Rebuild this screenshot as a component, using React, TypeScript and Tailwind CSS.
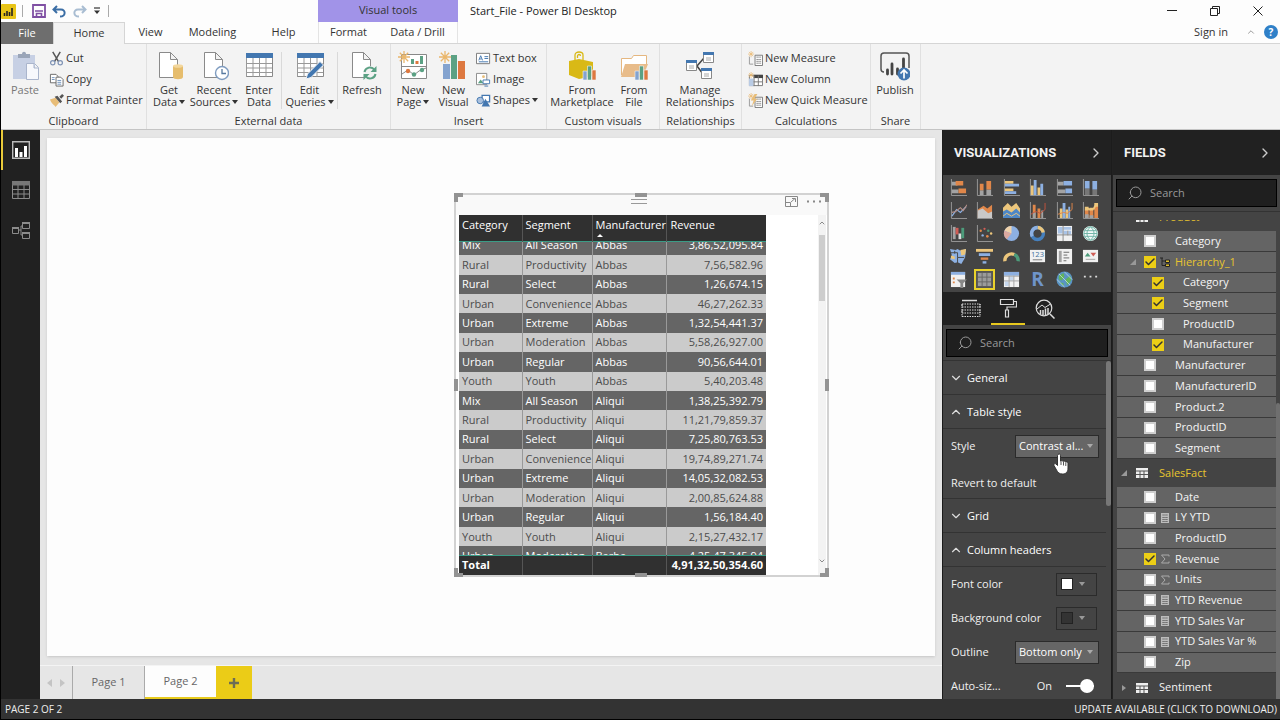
import type { ReactNode } from "react";
import { Check, ChevronDown, ChevronRight, ChevronUp, Search } from "lucide-react";

/* ---------- shared bits ---------- */

interface IconProps {
  children: ReactNode;
  className: string;
  box?: string;
}

function Icon({ children, className, box = "0 0 18 18" }: IconProps) {
  return (
    <svg viewBox={box} className={`shrink-0 ${className}`} fill="none" aria-hidden="true">
      {children}
    </svg>
  );
}

function Caret() {
  return (
    <Icon box="0 0 6 4" className="mb-0.5 ml-0.5 inline-block h-1 w-1.5">
      <path d="M0 0h6L3 4z" fill="#333" />
    </Icon>
  );
}

const spark = (
  <path
    d="M6 0v12M0 6h12M1.800 1.800l8.400 8.400M10.200 1.800l-8.400 8.400"
    stroke="#eab76c"
    strokeWidth="1.3"
  />
);

/* ---------- title bar ---------- */

function TitleBar() {
  return (
    <div className="flex h-[22px] bg-[#fdfdfd] text-[#222]">
      <div className="flex w-[317px] items-center">
        <Icon box="0 0 15 15" className="h-[15px] w-[15px]">
          <rect width="15" height="15" rx="1" fill="#e8c417" />
          <path d="M3.500 12V9M6 12V7M8.500 12V8M11 12V4" stroke="#222" strokeWidth="1.600" />
        </Icon>
        <span className="ml-1.5 h-3 w-px bg-[#aaa]" />
        <button aria-label="Save" className="ml-[9px]">
          <Icon box="0 0 14 14" className="h-3.5 w-3.5">
            <path d="M1 1h12v12H1z" stroke="#7f4fa3" strokeWidth="1.800" />
            <path d="M3 7h8M4.500 13V9.500h5V13" stroke="#7f4fa3" strokeWidth="1.600" />
          </Icon>
        </button>
        <button aria-label="Undo" className="ml-1.5">
          <Icon box="0 0 14 13" className="h-[13px] w-3.5">
            <path d="M5 1L1.500 4.500 5 8M1.500 4.500H9c5 0 5 7-1 7" stroke="#3b6ea5" strokeWidth="2" />
          </Icon>
        </button>
        <button aria-label="Redo" className="ml-[7px]">
          <Icon box="0 0 14 13" className="h-[13px] w-3.5">
            <path d="M9 1l3.500 3.500L9 8M12.500 4.500H5c-5 0-5 7 1 7" stroke="#a9bdd2" strokeWidth="2" />
          </Icon>
        </button>
        <button aria-label="Customize toolbar" className="ml-1.5">
          <Icon box="0 0 8 8" className="h-2 w-2">
            <path d="M1 1h6" stroke="#333" strokeWidth="1.200" />
            <path d="M1 3.500h6L4 7z" fill="#333" />
          </Icon>
        </button>
        <span className="ml-[7px] h-3 w-px bg-[#aaa]" />
      </div>
      <div className="w-[140px] bg-[#a193e8] text-center leading-[19px] text-[#333]">
        Visual tools
      </div>
      <h1 className="ml-3 leading-[22px]">Start_File - Power BI Desktop</h1>
      <div className="ml-auto flex items-center gap-[33px] pr-[17px]">
        <button aria-label="Minimize">
          <Icon box="0 0 10 10" className="h-2.5 w-2.5">
            <path d="M0 4.500h10" stroke="#222" />
          </Icon>
        </button>
        <button aria-label="Restore">
          <Icon box="0 0 10 10" className="h-2.5 w-2.5">
            <path d="M.5 2.500h7v7h-7zM2.500 2.500v-2h7v7h-2" stroke="#222" />
          </Icon>
        </button>
        <button aria-label="Close">
          <Icon box="0 0 10 10" className="h-2.5 w-2.5">
            <path d="M.5.5l9 9M9.500.5l-9 9" stroke="#222" />
          </Icon>
        </button>
      </div>
    </div>
  );
}

const tabs = [
  { name: "View", width: "w-[51px]" },
  { name: "Modeling", width: "w-[73px]" },
  { name: "Help", width: "w-[69px]" },
];

function RibbonTabs() {
  return (
    <nav className="flex h-[22px] bg-[#fdfdfd]">
      <button className="w-[52px] bg-[#6e6e6e] text-white">File</button>
      <button className="w-[72px] border-x border-t border-[#d5d5d5] bg-[#f3f3f3]">Home</button>
      <div className="flex grow border-b border-[#d5d5d5]">
        {tabs.map((tab) => (
          <button key={tab.name} className={tab.width}>
            {tab.name}
          </button>
        ))}
        <button className="w-[60px] border-l border-[#e4e4e4]">Format</button>
        <button className="w-20 border-r border-[#e4e4e4]">Data / Drill</button>
        <div className="ml-auto flex items-center gap-2 pr-0.5">
          <button className="pr-2.5">Sign in</button>
          <ChevronUp className="h-2.5 w-2.5 text-[#888]" />
          <button
            aria-label="Help"
            className="h-3.5 w-3.5 rounded-full bg-[#2f80c8] text-[10px] leading-[14px] font-bold text-white"
          >
            ?
          </button>
        </div>
      </div>
    </nav>
  );
}

/* ---------- ribbon ---------- */

interface GroupProps {
  label: string;
  width: string;
  children: ReactNode;
}

function Group({ label, width, children }: GroupProps) {
  return (
    <section className={`flex shrink-0 flex-col border-r border-[#e0e0e0] ${width}`}>
      <div className="flex h-[70px] pt-1">{children}</div>
      <h2 className="text-center leading-4">{label}</h2>
    </section>
  );
}

interface BigButtonProps {
  icon: ReactNode;
  lines: string[];
  width: string;
  menu?: boolean;
}

function BigButton({ icon, lines, width, menu }: BigButtonProps) {
  return (
    <button className={`flex shrink-0 flex-col items-center pt-[3px] leading-3 ${width}`}>
      <Icon box="0 0 30 30" className="mb-[3px] h-[30px] w-[30px]">
        {icon}
      </Icon>
      {lines.map((line, i) => (
        <span key={line} className="whitespace-nowrap">
          {line}
          {menu && i === lines.length - 1 && <Caret />}
        </span>
      ))}
    </button>
  );
}

function SmallButton({ icon, label, menu }: { icon: ReactNode; label: string; menu?: boolean }) {
  return (
    <button className="flex h-[21px] items-center gap-0.5 whitespace-nowrap">
      <Icon box="0 0 16 16" className="h-[15px] w-[15px]">
        {icon}
      </Icon>
      <span>
        {label}
        {menu && <Caret />}
      </span>
    </button>
  );
}

const doc = <path d="M5.500 1.500h11l7 7v18h-18zM16.500 1.500v7h7" fill="#fff" stroke="#8a8a8a" />;
const grid = (
  <>
    <path d="M2.500 2.500h26v23h-26z" fill="#fff" stroke="#8a8a8a" />
    <path d="M2.500 7v19M9 7v19M15.500 7v19M22 7v19M2 12.500h26M2 17h26M2 21.500h26" stroke="#999" />
    <path d="M2 2h27v5H2z" fill="#4377b0" />
  </>
);

const getData = (
  <>
    {doc}
    <path d="M19 15v11c0 3 10 3 10 0V15z" fill="#e6bd6d" />
    <ellipse cx="24" cy="15" rx="5" ry="1.800" fill="#f3d79d" />
  </>
);
const recent = (
  <>
    {doc}
    <circle cx="23" cy="22" r="6.500" fill="#fff" stroke="#7f9cc0" strokeWidth="1.400" />
    <path d="M23 18v4.500h4" stroke="#56799f" strokeWidth="1.300" />
  </>
);
const editQueries = (
  <>
    {grid}
    <path d="M11 28l1.500-5L25 10.500l3.500 3.500L16 26.500z" fill="#4377b0" stroke="#f3f3f3" />
  </>
);
const refresh = (
  <>
    {doc}
    <circle cx="23" cy="22" r="7" fill="#f3f3f3" />
    <path d="M17.500 21a5.500 5.500 0 0 1 10-2M28.500 23a5.500 5.500 0 0 1-10 2" stroke="#5ba184" strokeWidth="2" />
    <path d="M29.500 15v6h-6zM16.500 29v-6h6z" fill="#5ba184" />
  </>
);
const paste = (
  <>
    <path d="M3 4h22v24H3z" fill="#c7d0e4" />
    <path d="M8 7V3h4c0-3 4-3 4 0h4v4z" fill="#9aa5b8" />
    <path d="M16.500 12.500h8l4 4v12h-12zM24 13v4h4" fill="#f7f8fc" stroke="#aab5cc" />
  </>
);
const newPage = (
  <>
    <path d="M3.500 3.500h25v24h-25zM3 15.500h25" fill="#fff" stroke="#888" />
    <path d="M13 8h3v5h-3zM22 5h3v8h-3z" fill="#5ba184" />
    <path d="M17.500 10h3v3h-3z" fill="#dd7840" />
    <path d="M4 23l6-4 6 5 5-4 7-3" stroke="#888" />
    <circle cx="10" cy="20" r="2.200" fill="#dd7840" />
    <circle cx="16" cy="23.500" r="2.200" fill="#5ba184" />
    <circle cx="24" cy="19" r="2.200" fill="#5ba184" />
    {spark}
  </>
);
const newVisual = (
  <>
    <path d="M4 13h7v15H4z" fill="#84a3cf" />
    <path d="M12 4h6v24h-6z" fill="#5ba184" />
    <path d="M19 10h7v18h-7z" fill="#dd7840" />
    {spark}
  </>
);
const miniBars = (
  <>
    <path d="M16 20h4v9h-4z" fill="#84a3cf" stroke="#f3f3f3" strokeWidth=".6" />
    <path d="M20.500 15h4v14h-4z" fill="#5ba184" stroke="#f3f3f3" strokeWidth=".6" />
    <path d="M25 19h4v10h-4z" fill="#dd7840" stroke="#f3f3f3" strokeWidth=".6" />
  </>
);
const marketplace = (
  <>
    <path d="M2 10l10-2 14 3v14l-14 3-10-4z" fill="#d9b916" />
    <path d="M8 10V4c0-4 8-4 8 0v5M10.500 7V5c0-2 3-2 3 0" stroke="#d9b916" strokeWidth="1.300" />
    {miniBars}
  </>
);
const fromFile = (
  <>
    <path d="M2.500 24V7.500h10l2-3h13V13" fill="#fff" stroke="#e5b780" />
    <path d="M6 13h23l-5 13H2z" fill="#e8bc8a" />
    {miniBars}
  </>
);
const relations = (
  <>
    <path d="M12 15l7-8M12 15l6 8" stroke="#444" strokeWidth="1.500" />
    <path d="M1.500 9.500h10v10h-10zM18.500 1.500h10v10h-10zM16.500 17.500h10v10h-10z" fill="#fff" stroke="#888" />
    <path d="M1 9h11v3H1zM18 1h11v3H18zM16 17h11v3H16z" fill="#4377b0" />
    <path d="M4 15h5M4 17h5M21 7h5M21 9h5M19 23h5M19 25h5" stroke="#aaa" />
  </>
);
const publish = (
  <>
    <path d="M4 21c-2 0-3-1-3-3V5c0-2 1-3 3-3h22c2 0 3 1 3 3v12" stroke="#555" strokeWidth="1.500" />
    <path d="M7.500 23v-4M12 23V13M17.500 23v-5M23.500 21V8" stroke="#444" strokeWidth="2.800" strokeLinecap="round" />
    <circle cx="24" cy="23" r="6.500" fill="#4377b0" />
    <path d="M24 27.500v-8M20.500 22.500l3.500-3.500 3.500 3.500" stroke="#fff" strokeWidth="1.700" />
  </>
);

const measure = (
  <>
    <path d="M1.500 6v8h4" stroke="#999" />
    <path d="M7.500 4.500h8v11h-8z" fill="#fff" stroke="#777" />
    <path d="M9 6.500h5M9 9h5M9 11h5M9 13h5" stroke="#777" strokeDasharray="1.500 .5" />
    <g transform="scale(.55)">{spark}</g>
  </>
);

function Ribbon() {
  return (
    <div className="flex h-[87px] overflow-hidden border-b border-[#c4c4c4] bg-[#f3f3f3]">
      <Group label="Clipboard" width="w-[146px]">
        <div className="flex text-[#777]">
          <BigButton icon={paste} lines={["Paste"]} width="w-12" />
        </div>
        <div>
          <SmallButton
            label="Cut"
            icon={
              <>
                <path d="M4 1l6 10M12 1L6 11" stroke="#555" strokeWidth="1.600" />
                <circle cx="4" cy="12.500" r="2.300" stroke="#7f93b5" strokeWidth="1.300" />
                <circle cx="12" cy="12.500" r="2.300" stroke="#7f93b5" strokeWidth="1.300" />
              </>
            }
          />
          <SmallButton
            label="Copy"
            icon={
              <>
                <path d="M1.500 2.500h6l2 2v7h-8z" fill="#fff" stroke="#666" />
                <path d="M7.500 5.500h5l2.500 2.500v7H7.500z" fill="#fff" stroke="#666" />
                <path d="M3 6h3M3 8h3M9 9h4M9 11h4M9 13h4" stroke="#6c8fba" />
              </>
            }
          />
          <SmallButton
            label="Format Painter"
            icon={
              <>
                <path d="M1 7l6-2 4 5-4 5c-2-3-4-3-6-8z" fill="#e8bd78" />
                <path d="M6 4l3-1 5 6-2 2zM11 4l3-3 2 2-3 3z" fill="#555" />
              </>
            }
          />
        </div>
      </Group>
      <Group label="External data" width="w-[244px]">
        <BigButton icon={getData} lines={["Get", "Data"]} width="w-11" menu />
        <BigButton icon={recent} lines={["Recent", "Sources"]} width="w-[46px]" menu />
        <BigButton icon={grid} lines={["Enter", "Data"]} width="w-11" />
        <span className="my-1 w-px bg-[#d9d9d9]" />
        <BigButton icon={editQueries} lines={["Edit", "Queries"]} width="w-[55px]" menu />
        <span className="my-1 w-px bg-[#d9d9d9]" />
        <BigButton icon={refresh} lines={["Refresh"]} width="w-12" />
      </Group>
      <Group label="Insert" width="w-[156px]">
        <BigButton icon={newPage} lines={["New", "Page"]} width="w-11" menu />
        <BigButton icon={newVisual} lines={["New", "Visual"]} width="w-[37px]" />
        <div className="pl-1">
          <SmallButton
            label="Text box"
            icon={
              <>
                <path d="M.5 2.500h14v11H.5z" fill="#fff" stroke="#777" />
                <path d="M3 10l2-5 2 5M4 8.500h2M9 6h4M9 8h4M3 11.500h10" stroke="#4377b0" />
              </>
            }
          />
          <SmallButton
            label="Image"
            icon={
              <>
                <path d="M.5 1.500h11v12H.5z" fill="#fff" stroke="#888" />
                <path d="M2 12l3-4 3 4z" fill="#5ba184" />
                <circle cx="8" cy="5" r="1.500" fill="#e8bd78" />
                <path d="M7.500 8.500h7v4h-7zM9 15h4" fill="#fff" stroke="#4377b0" />
              </>
            }
          />
          <SmallButton
            label="Shapes"
            menu
            icon={
              <>
                <path d="M6.500 2.500h8v7h-8z" fill="#fff" stroke="#4377b0" strokeWidth="1.400" />
                <circle cx="4.500" cy="8" r="3.500" fill="#a9c0dd" stroke="#4377b0" />
                <path d="M10 6l5 8.500H6z" fill="#4377b0" />
              </>
            }
          />
        </div>
      </Group>
      <Group label="Custom visuals" width="w-[113px]">
        <BigButton icon={marketplace} lines={["From", "Marketplace"]} width="w-[70px]" />
        <BigButton icon={fromFile} lines={["From", "File"]} width="w-[34px]" />
      </Group>
      <Group label="Relationships" width="w-[82px]">
        <BigButton icon={relations} lines={["Manage", "Relationships"]} width="w-[80px]" />
      </Group>
      <Group label="Calculations" width="w-[129px]">
        <div className="pl-[6px]">
          <SmallButton label="New Measure" icon={measure} />
          <SmallButton
            label="New Column"
            icon={
              <>
                <path d="M1.500 3.500h14v11h-14z" fill="#fff" stroke="#777" />
                <path d="M1 7h5v8H1z" fill="#b9cbe4" />
                <path d="M6 3h10v3.500H6z" fill="#444" />
                <path d="M6.500 4v11M11 4v11M6 10.500h9" stroke="#777" />
                <g transform="scale(.55)">{spark}</g>
              </>
            }
          />
          <SmallButton
            label="New Quick Measure"
            icon={
              <>
                {measure}
                <path d="M7 1L3 8h3l-2 6 6-8H7l3-5z" fill="#e8bd78" />
              </>
            }
          />
        </div>
      </Group>
      <Group label="Share" width="w-[50px]">
        <BigButton icon={publish} lines={["Publish"]} width="w-12" />
      </Group>
    </div>
  );
}

/* ---------- left rail ---------- */

function ViewRail() {
  return (
    <nav className="flex w-[39px] shrink-0 flex-col bg-[#212121]">
      <button aria-label="Report" className="flex h-10 items-center border-l-2 border-[#e8c93a] pl-[9px]">
        <Icon className="h-[18px] w-[18px]">
          <path d="M.7.7h16.600v16.600H.7z" stroke="#bbb" strokeWidth="1.400" />
          <path d="M4.500 16V7M9 16v-5M13.500 16V5" stroke="#fff" strokeWidth="3" />
        </Icon>
      </button>
      <button aria-label="Data" className="flex h-10 items-center pl-[11px]">
        <Icon className="h-[18px] w-[18px]">
          <path d="M.5.5h17v17H.5zM6 4v14M12 4v14M0 8.500h18M0 13h18" stroke="#8b8b8b" />
          <path d="M0 0h18v4.500H0z" fill="#777" />
        </Icon>
      </button>
      <button aria-label="Relationships" className="flex h-10 items-center pl-[11px]">
        <Icon className="h-[18px] w-[18px]">
          <path d="M.5 6.500h6v6h-6zM10.500 1.500h7v6h-7zM10.500 11.500h7v6h-7zM7 9h2V5h2M9 9v5h2" stroke="#8b8b8b" />
          <path d="M0 6h7v2H0zM10 1h8v2h-8zM10 11h8v2h-8z" fill="#8b8b8b" />
        </Icon>
      </button>
    </nav>
  );
}

/* ---------- report canvas ---------- */

const rows = [
  ["Mix", "All Season", "Abbas", "3,86,52,095.84"],
  ["Rural", "Productivity", "Abbas", "7,56,582.96"],
  ["Rural", "Select", "Abbas", "1,26,674.15"],
  ["Urban", "Convenience", "Abbas", "46,27,262.33"],
  ["Urban", "Extreme", "Abbas", "1,32,54,441.37"],
  ["Urban", "Moderation", "Abbas", "5,58,26,927.00"],
  ["Urban", "Regular", "Abbas", "90,56,644.01"],
  ["Youth", "Youth", "Abbas", "5,40,203.48"],
  ["Mix", "All Season", "Aliqui", "1,38,25,392.79"],
  ["Rural", "Productivity", "Aliqui", "11,21,79,859.37"],
  ["Rural", "Select", "Aliqui", "7,25,80,763.53"],
  ["Urban", "Convenience", "Aliqui", "19,74,89,271.74"],
  ["Urban", "Extreme", "Aliqui", "14,05,32,082.53"],
  ["Urban", "Moderation", "Aliqui", "2,00,85,624.88"],
  ["Urban", "Regular", "Aliqui", "1,56,184.40"],
  ["Youth", "Youth", "Aliqui", "2,15,27,432.17"],
  ["Urban", "Moderation", "Barba", "4,25,47,345.94"],
];

function Columns() {
  return (
    <colgroup>
      <col className="w-[63px]" />
      <col className="w-[70px]" />
      <col className="w-[74px]" />
      <col className="w-[100px]" />
    </colgroup>
  );
}

function DataTable() {
  return (
    <div className="w-[307px]">
      <table className="w-full table-fixed bg-[#303030] text-left text-white">
        <Columns />
        <thead>
          <tr className="h-[26px] border-b border-[#3a9c86] align-top leading-5">
            <th className="border-r border-[#555] pl-[3px] font-normal">Category</th>
            <th className="border-r border-[#555] pl-[3px] font-normal">Segment</th>
            <th className="relative border-r border-[#555] pl-[3px] font-normal">
              Manufacturer
              <Icon box="0 0 6 3" className="absolute bottom-1 left-1 h-[3px] w-1.5">
                <path d="M0 3h6L3 0z" fill="#fff" />
              </Icon>
            </th>
            <th className="pl-1 font-normal">Revenue</th>
          </tr>
        </thead>
      </table>
      <div className="h-[313px] overflow-hidden">
        <table className="-mt-1.5 h-[330px] w-full table-fixed leading-4">
          <Columns />
          <tbody>
            {rows.map((row, i) => (
              <tr
                key={i}
                className={i % 2 === 0 ? "bg-[#656565] font-medium text-white" : "bg-[#cbcbcb] text-[#4c4c4c]"}
              >
                <td className="border-r border-[#999] pl-[3px]">{row[0]}</td>
                <td className="border-r border-[#999] pl-[3px] whitespace-nowrap">{row[1]}</td>
                <td className="border-r border-[#999] pl-[3px]">{row[2]}</td>
                <td className="pr-[3px] text-right">{row[3]}</td>
              </tr>
            ))}
          </tbody>
        </table>
      </div>
      <table className="w-full table-fixed bg-[#303030] text-left text-white">
        <Columns />
        <tbody>
          <tr className="h-5 border-t border-[#3a9c86]">
            <th className="border-r border-[#555] pl-[3px]">Total</th>
            <td className="border-r border-[#555]" />
            <td className="border-r border-[#555]" />
            <td className="pr-[3px] text-right font-bold whitespace-nowrap">4,91,32,50,354.60</td>
          </tr>
        </tbody>
      </table>
    </div>
  );
}

function Visual() {
  return (
    <article className="absolute top-[55px] left-[407px] flex h-96 w-[375px] flex-col border-2 border-[#d2d2d2] bg-white">
      <Icon box="0 0 375 384" className="pointer-events-none absolute -inset-0.5 h-96 w-[375px]">
        <path
          d="M2 9V2h7M366 2h7v7M373 375v7h-7M9 382H2v-7M181 2h12M181 382h12M2 186v12M373 186v12"
          stroke="#939393"
          strokeWidth="4"
        />
      </Icon>
      <div className="grid h-5 grid-cols-[1fr_auto_1fr] items-start bg-[#f9f9f9] pr-1.5">
        <span />
        <Icon box="0 0 16 5" className="mt-1 h-[5px] w-4">
          <path d="M0 .5h16M0 4.500h16" stroke="#999" />
        </Icon>
        <div className="flex items-center justify-end gap-[9px] pt-px">
          <button aria-label="Focus mode">
            <Icon box="0 0 13 11" className="h-[11px] w-[13px]">
              <path d="M.5.5h12v10H.5zM.5 6.500h5v4M6 6l4-3.500M7 2.500h3.500V6" stroke="#888" />
            </Icon>
          </button>
          <button aria-label="More options">
            <Icon box="0 0 14 3" className="h-[3px] w-3.5">
              <path d="M0 1.500h2M6 1.500h2M12 1.500h2" stroke="#888" strokeWidth="2" />
            </Icon>
          </button>
        </div>
      </div>
      <div className="flex grow justify-between px-[3px] pr-px pl-[3px]">
        <DataTable />
        <div className="flex w-2 flex-col items-center bg-[#f3f3f3] pt-1">
          <ChevronUp className="h-2 w-2 text-[#555]" />
          <div className="mt-2 h-[66px] w-1.5 bg-[#cdcdcd]" />
          <ChevronDown className="mt-auto mb-2.5 h-2 w-2 text-[#555]" />
        </div>
      </div>
    </article>
  );
}

function ReportArea() {
  return (
    <main className="flex min-w-0 grow flex-col bg-[#e6e6e6]">
      <div className="relative mx-[7px] mt-2 mb-[9px] grow bg-[#fdfdfd] shadow-sm">
        <Visual />
      </div>
      <nav className="flex h-[34px] shrink-0 border-t border-[#f4f4f4] text-[#666]">
        <div className="flex w-8 items-center justify-center gap-2">
          <button aria-label="Previous page">
            <Icon box="0 0 5 8" className="h-2 w-[5px]">
              <path d="M5 0v8L0 4z" fill="#c4c4c4" />
            </Icon>
          </button>
          <button aria-label="Next page">
            <Icon box="0 0 5 8" className="h-2 w-[5px]">
              <path d="M0 0v8l5-4z" fill="#c4c4c4" />
            </Icon>
          </button>
        </div>
        <button className="w-[73px] border-x border-[#aaa] font-medium">Page 1</button>
        <button className="w-[71px] border-b-2 border-[#e8cb1c] bg-[#fdfdfd] font-medium">Page 2</button>
        <button aria-label="New page" className="flex w-9 items-center justify-center bg-[#ebcc17]">
          <Icon box="0 0 10 10" className="h-2.5 w-2.5">
            <path d="M5 0v10M0 5h10" stroke="#6d6d55" strokeWidth="2.400" />
          </Icon>
        </button>
      </nav>
    </main>
  );
}

/* ---------- visualizations pane ---------- */

const O = "#e0874a";
const B = "#8db0e2";
const Y = "#ecc67c";
const G = "#a3a3a3";
const axis = <path d="M1.500 0v17.500H18" stroke="#9a9a9a" />;

const visuals: { name: string; art: ReactNode }[] = [
  {
    name: "Stacked bar",
    art: <>{axis}<path d="M2 3h6v4H2zM2 11h7v4H2z" fill={G} /><path d="M6 2h8v5H6zM9 10h8v5H9z" fill={O} /></>,
  },
  {
    name: "Stacked column",
    art: <>{axis}<path d="M4 12h4v5H4zM11 11h5v6h-5z" fill={G} /><path d="M4 5h4v7H4zM11 2h5v9h-5z" fill={O} /></>,
  },
  {
    name: "Clustered bar",
    art: <>{axis}<path d="M2 2h9v3H2zM2 10h9v3H2z" fill={Y} /><path d="M2 5h15v3H2zM2 13h12v3H2z" fill={B} /></>,
  },
  {
    name: "Clustered column",
    art: <>{axis}<path d="M2 7h3v10H2zM9 9h3v8H9z" fill={Y} /><path d="M5 1h3v16H5zM12 5h3v12h-3z" fill={B} /></>,
  },
  {
    name: "100% bar",
    art: <>{axis}<path d="M2 3h6v4H2zM2 11h8v4H2z" fill={G} /><path d="M8 2h9v5H8zM10 10h7v5h-7z" fill={B} /></>,
  },
  {
    name: "100% column",
    art: <>{axis}<path d="M3 10h5v7H3zM11 11h5v6h-5z" fill="#777" /><path d="M3 2h5v8H3zM11 2h5v9h-5z" fill={B} /></>,
  },
  {
    name: "Line",
    art: <>{axis}<path d="M2 15l5-7 4 3 6-6" stroke={B} strokeWidth="1.300" /><path d="M2 11l4-1 5-4 3 3 4-6" stroke="#b58f86" strokeWidth="1.200" /></>,
  },
  {
    name: "Area",
    art: <>{axis}<path d="M2 17V8l6-4 4 3 5-4v14z" fill={O} /><path d="M2 17V9l5-2 6 5 4-2v7z" fill="#c9c9c9" /></>,
  },
  {
    name: "Stacked area",
    art: <><path d="M0 16V6l5-5 4 4 5-4 4 6v9z" fill={Y} /><path d="M0 17v-7l4-2 5 3 5-4 4 4v6z" fill="#4d87c7" /><path d="M0 15l4-3 5 3 5-3 4 3" stroke={Y} /></>,
  },
  {
    name: "Line and stacked column",
    art: <>{axis}<path d="M4 3h3v14H4zM9 7h3v10H9z" fill={O} /><path d="M4 11h3v6H4zM13 9h2v8h-2z" fill={G} /><path d="M2 13l5-3 5 2 5-4V1" stroke="#c3543e" /></>,
  },
  {
    name: "Line and clustered column",
    art: <>{axis}<path d="M4 7h3v10H4zM10 8h3v9h-3z" fill={Y} /><path d="M7 1h3v16H7zM13 5h2v12h-2z" fill={B} /><path d="M2 13l6-2 4 1 5-4V1" stroke={O} /></>,
  },
  {
    name: "Ribbon",
    art: <>{axis}<path d="M3 8h4v9H3zM8 7h4v10H8zM13 4h4v13h-4z" fill={O} /><path d="M3 5h4v4H3zM8 6h4v3H8zM13 1h4v4h-4z" fill={Y} /><path d="M6 7l3 1M12 8l2-4" stroke={Y} strokeWidth="2" /><path d="M3 13h4v4H3zM8 14h4v3H8z" fill={G} /></>,
  },
  {
    name: "Waterfall",
    art: <>{axis}<path d="M3 2h3v13H3z" fill={G} /><path d="M6 3h3v7H6z" fill="#cf5d56" /><path d="M9 9h3v6H9z" fill="#ddd" /><path d="M12 3h3v11h-3z" fill="#4d9c7b" /></>,
  },
  {
    name: "Scatter",
    art: <>{axis}<circle cx="5" cy="6" r="1.300" fill={O} /><circle cx="9" cy="4" r="1.200" fill="#cf5d56" /><circle cx="13" cy="6" r="1.300" fill="#4d9c7b" /><circle cx="7" cy="11" r="1.300" fill={B} /><circle cx="12" cy="12" r="1.400" fill={O} /><circle cx="16" cy="9" r="1.300" fill={Y} /></>,
  },
  {
    name: "Pie",
    art: <><circle cx="9" cy="9" r="8" fill={B} /><path d="M9 9V1a8 8 0 0 0-7.500 5z" fill="#efd2ab" /><path d="M9 9L1.500 6A8 8 0 0 0 4 15z" fill="#dba9a0" /></>,
  },
  {
    name: "Donut",
    art: <><circle cx="9" cy="9" r="6.300" stroke="#4680bd" strokeWidth="3.600" /><path d="M9 2.700A6.300 6.300 0 0 1 15 8" stroke={Y} strokeWidth="3.600" /><path d="M3.500 12A6.300 6.300 0 0 1 9 2.700" stroke={B} strokeWidth="3.600" /></>,
  },
  {
    name: "Treemap",
    art: <><path d="M1 1h16v16H1z" fill="#f0f0f0" /><path d="M2 2h5v7H2zM8 2h8v3H8zM8 6h4v4H8zM13 6h3v4h-3z" fill="#a9c3e6" /><path d="M7.500 1v16M1 10.500h16M12.500 6v5" stroke="#888" /></>,
  },
  {
    name: "Map",
    art: <><circle cx="9" cy="9" r="8" fill="#f1faf8" /><circle cx="9" cy="9" r="7" stroke="#6cb3a5" /><path d="M9 2c-5 4-5 10 0 14M9 2c5 4 5 10 0 14M3 6h12M2 9h14M3 12h12" stroke="#6cb3a5" /></>,
  },
  {
    name: "Filled map",
    art: <><path d="M0 1l6 1 2-1 3 2 6-2-1 9-4 7-4-2-3 1-5-4 2-4z" fill={B} /><path d="M11 2l6-1-1 6-4 1zM1 8l4 1v3l-4-1z" fill={Y} /><path d="M1 5h7v5h7M8 10v6M5 3v3" stroke="#444" /></>,
  },
  {
    name: "Funnel",
    art: <><path d="M0 1h18v3H0z" fill={Y} /><path d="M3 5.500h12v3H3z" fill={B} /><path d="M5 10h8v2.500H5z" fill={O} /><path d="M7 14h4v2.500H7z" fill={B} /></>,
  },
  {
    name: "Gauge",
    art: <><path d="M2 14a7 7 0 0 1 10-7" stroke={Y} strokeWidth="3.500" /><path d="M12 7a7 7 0 0 1 4 7" stroke="#4d9c7b" strokeWidth="3.500" /></>,
  },
  {
    name: "Card",
    art: <><path d="M1 2h16v13H1z" fill="#f1f1f1" /><text x="9" y="10" fontSize="8" textAnchor="middle" fill="#42719f">123</text><path d="M4 12.500h10" stroke="#777" /></>,
  },
  {
    name: "Multi-row card",
    art: <><path d="M1 1h16v16H1z" fill="#f1f1f1" /><path d="M3 3h3v12H3z" fill={G} /><path d="M8 4.500h6M8 7.500h4M8 10.500h6M8 13.500h3" stroke="#666" /></>,
  },
  {
    name: "KPI",
    art: <><path d="M1 2h16v13H1z" fill="#f1f1f1" /><path d="M3 9l3-4 3 4z" fill="#4d9c7b" /><path d="M9 5h6l-3 4z" fill="#cf5d56" /><path d="M4 12h10" stroke={G} /></>,
  },
  {
    name: "Slicer",
    art: <><path d="M1 1h15v16H1z" fill="#f1f1f1" /><path d="M1 1h15v3H1z" fill={B} /><path d="M3 7h2v2H3zM3 11h2v2H3z" fill={O} /><path d="M7 9h11l-4 4v5h-3v-5z" fill="#888" /></>,
  },
  {
    name: "Table",
    art: <><path d="M2 2h14v14H2z" fill="#9b9b9b" /><path d="M2 6.500h14M2 11.500h14M6.500 2v14M11.500 2v14" stroke="#666" /></>,
  },
  {
    name: "Matrix",
    art: <><path d="M1 1h16v16H1z" fill="#f1f1f1" /><path d="M1 1h16v4H1z" fill={B} /><path d="M7 6h4v4H7zM2 11h4v5H2z" fill="#c5d7ee" /><path d="M1 5.500h16M1 10.500h16M6.500 5v12M11.500 5v12" stroke={G} /></>,
  },
  {
    name: "R script",
    art: <text x="9" y="16" fontSize="20" fontWeight="bold" textAnchor="middle" fill="#6f94c9">R</text>,
  },
  {
    name: "ArcGIS map",
    art: <><circle cx="9" cy="9" r="8.500" fill="#5a94c4" /><path d="M3 5l5-3 1 4-3 4-3-1zM10 9l5-4 1 5-4 5zM4 12l4 1v3z" fill="#61b35d" /><path d="M3 3l12 12M9 1l8 8M1 9l8 8" stroke="#d7e8ee" strokeWidth=".7" /></>,
  },
  {
    name: "More",
    art: <path d="M2 6h2M8 6h2M14 6h2" stroke="#ddd" strokeWidth="2" />,
  },
];

function PaneHeader({ title }: { title: string }) {
  return (
    <header className="flex h-[45px] shrink-0 items-center justify-between bg-[#212121] pr-[7px] pl-[11px]">
      <h2 className="font-[Roboto,sans-serif] text-[13px] font-bold text-[#f2f2f2]">{title}</h2>
      <button aria-label={`Collapse ${title}`}>
        <ChevronRight className="h-4 w-4 text-[#ccc]" strokeWidth={2} />
      </button>
    </header>
  );
}

function SearchBox({ id }: { id: string }) {
  return (
    <label htmlFor={id} className="flex h-7 items-center gap-[7px] border border-black bg-[#1f1f1f] px-2.5">
      <Search className="h-4 w-4 shrink-0 -scale-x-100 text-[#999]" strokeWidth={1.5} />
      <input
        id={id}
        placeholder="Search"
        className="w-full min-w-0 bg-transparent text-[11px] text-white outline-none placeholder:text-[#999]"
      />
    </label>
  );
}

function Section({ title, open }: { title: string; open?: boolean }) {
  return (
    <button className="flex h-[34px] w-full items-center gap-2 border-y border-t-transparent border-b-[#333] pl-1.5 text-white">
      {open ? (
        <ChevronUp className="h-3.5 w-3.5 text-[#ddd]" strokeWidth={2} />
      ) : (
        <ChevronDown className="h-3.5 w-3.5 text-[#ddd]" strokeWidth={2} />
      )}
      <span className="-ml-1">{title}</span>
    </button>
  );
}

function Dropdown({ id, value }: { id: string; value: string }) {
  return (
    <div className="grid w-[84px] items-center">
      <select
        id={id}
        className="col-start-1 row-start-1 h-[23px] w-full appearance-none border border-[#2b2b2b] bg-[#666] pl-[3px] text-white"
      >
        <option>{value}</option>
      </select>
      <Icon box="0 0 6 4" className="pointer-events-none col-start-1 row-start-1 mr-1.5 h-1 w-1.5 justify-self-end">
        <path d="M0 0h6L3 4z" fill="#aaa" />
      </Icon>
    </div>
  );
}

function ColorRow({ label, swatch }: { label: string; swatch: string }) {
  return (
    <div className="flex h-[34px] items-center justify-between pr-[9px] pl-2">
      <span>{label}</span>
      <button aria-label={label} className="flex h-[23px] w-[41px] items-center gap-1.5 border border-[#2b2b2b] pl-1">
        <span className={`h-3 w-3 border border-[#222] ${swatch}`} />
        <Icon box="0 0 6 4" className="h-1 w-1.5">
          <path d="M0 0h6L3 4z" fill="#999" />
        </Icon>
      </button>
    </div>
  );
}

function HandCursor() {
  return (
    <Icon box="0 0 16 22" className="pointer-events-none absolute top-6 right-[37px] z-10 h-[22px] w-4">
      <path
        d="M5 1.500c1-1 2.500-.5 2.500 1V8c1-1 2.300-.6 2.500.5 1-.8 2.200-.3 2.500.7 1.300-.6 2.500 0 2.500 1.500V15c0 4-2 6-5.500 6S5 19.500 3.500 17L1 12.500c-.5-1.500 1-2.500 2-1.500l1.500 1.500V2.500z"
        fill="#fff"
        stroke="#333"
      />
      <path d="M8 8v4M10.500 9v3.500M12.800 10v3" stroke="#555" />
    </Icon>
  );
}

function VisualizationsPane() {
  return (
    <aside className="flex w-[170px] shrink-0 flex-col border-x border-[#1c1c1c] bg-[#444] text-[#f0f0f0]">
      <PaneHeader title="VISUALIZATIONS" />
      <div className="grid h-[117px] shrink-0 auto-rows-[23px] grid-cols-6 pt-px pr-[7px] pl-0.5">
        {visuals.map((visual) => (
          <button
            key={visual.name}
            aria-label={visual.name}
            className={
              visual.name === "Table"
                ? "m-auto border-2 border-[#ead22c] bg-[#555]"
                : "m-auto"
            }
          >
            <Icon className="h-[17px] w-[17px]">{visual.art}</Icon>
          </button>
        ))}
      </div>
      <div className="flex h-[33px] shrink-0 items-stretch bg-[#212121] pl-3">
        <button aria-label="Fields" className="flex w-9 items-center pl-1.5">
          <Icon box="0 0 20 20" className="h-5 w-5">
            <path d="M1 1.500h15" stroke="#ddd" strokeWidth="1.500" />
            <path d="M1 5h18v3H1zM1 11h18v3H1zM1 17.500h18M1 5v13M19 5v13" stroke="#ddd" strokeDasharray="1.500 1" />
          </Icon>
        </button>
        <button aria-label="Format" className="flex w-[34px] items-center justify-center border-b-2 border-[#e8c91e]">
          <Icon box="0 0 18 20" className="h-5 w-[18px]">
            <path d="M1.500 1.500h13v5h-13zM14.500 3.500h3V9H8v3M6.500 12h3v7h-3z" stroke="#ddd" strokeWidth="1.200" />
          </Icon>
        </button>
        <button aria-label="Analytics" className="flex w-10 items-center justify-center">
          <Icon box="0 0 20 20" className="h-5 w-5">
            <circle cx="9" cy="9" r="7.800" stroke="#ddd" strokeWidth="1.200" />
            <path d="M5.500 15v-4M8 16v-5M10.500 16V9.500M13 15V9M15 15l4.500 4.500" stroke="#ddd" strokeWidth="1.500" />
            <path d="M2 10l5-4 3 2.500L15.500 5" stroke="#ddd" />
          </Icon>
        </button>
      </div>
      <div className="mx-[3px] mt-1 mb-[3px] shrink-0">
        <SearchBox id="format-search" />
      </div>
      <div className="flex min-h-0 grow overflow-hidden border-t border-[#333]">
        <div className="min-w-0 grow">
          <Section title="General" />
          <Section title="Table style" open />
          <div className="relative flex h-[34px] items-center justify-between pr-[7px] pl-2">
            <label htmlFor="style">Style</label>
            <Dropdown id="style" value="Contrast al..." />
            <HandCursor />
          </div>
          <div className="flex h-9 items-center border-b border-[#333] pt-1.5 pl-2">
            <button>Revert to default</button>
          </div>
          <Section title="Grid" />
          <Section title="Column headers" open />
          <ColorRow label="Font color" swatch="bg-white" />
          <ColorRow label="Background color" swatch="bg-[#333]" />
          <div className="flex h-[34px] items-center justify-between pr-[7px] pl-2">
            <label htmlFor="outline">Outline</label>
            <Dropdown id="outline" value="Bottom only" />
          </div>
          <label className="flex h-[34px] items-center pr-3 pl-2">
            <span>Auto-siz...</span>
            <span className="mr-3.5 ml-auto">On</span>
            <span className="grid items-center">
              <input
                type="checkbox"
                role="switch"
                defaultChecked
                aria-label="Auto-size column width"
                className="col-start-1 row-start-1 h-0.5 w-7 appearance-none bg-white"
              />
              <span className="col-start-1 row-start-1 h-3.5 w-3.5 justify-self-end rounded-full bg-white" />
            </span>
          </label>
        </div>
        <div className="h-[145px] w-[5px] shrink-0 rounded-sm bg-[#777]" />
      </div>
    </aside>
  );
}

/* ---------- fields pane ---------- */

interface Field {
  name: string;
  checked?: boolean;
  kind?: "measure" | "sum" | "hierarchy";
  child?: boolean;
}

const productFields: Field[] = [
  { name: "Category" },
  { name: "Hierarchy_1", checked: true, kind: "hierarchy" },
  { name: "Category", checked: true, child: true },
  { name: "Segment", checked: true, child: true },
  { name: "ProductID", child: true },
  { name: "Manufacturer", checked: true, child: true },
  { name: "Manufacturer" },
  { name: "ManufacturerID" },
  { name: "Product.2" },
  { name: "ProductID" },
  { name: "Segment" },
];

const salesFields: Field[] = [
  { name: "Date" },
  { name: "LY YTD", kind: "measure" },
  { name: "ProductID" },
  { name: "Revenue", checked: true, kind: "sum" },
  { name: "Units", kind: "sum" },
  { name: "YTD Revenue", kind: "measure" },
  { name: "YTD Sales Var", kind: "measure" },
  { name: "YTD Sales Var %", kind: "measure" },
  { name: "Zip" },
];

function KindIcon({ kind }: { kind?: Field["kind"] }) {
  return (
    <Icon box="0 0 10 10" className="h-2.5 w-2.5">
      {kind === "measure" && (
        <>
          <path d="M1 0h8v10H1z" fill="#bbb" />
          <path d="M2.500 2h5M2.500 4.500h5M2.500 6.500h5M2.500 8.500h5" stroke="#555" strokeDasharray="1.200 .7" />
        </>
      )}
      {kind === "sum" && <path d="M9 2.500V1H1.500L5 5 1.500 9H9V7.500" stroke="#aaa" />}
      {kind === "hierarchy" && (
        <>
          <path d="M0 1h3M2 1v7.500h3M2 4h3" stroke="#222" />
          <path d="M5.500 3h4v2.500h-4zM5.500 7h4v2.500h-4z" fill="#e0c02b" stroke="#222" />
        </>
      )}
    </Icon>
  );
}

function Disclosure({ open, show = true }: { open?: boolean; show?: boolean }) {
  return (
    <Icon box="0 0 6 6" className="h-1.5 w-1.5">
      {show && <path d={open ? "M6 0v6H0z" : "M1 0v6l4-3z"} fill="#999" />}
    </Icon>
  );
}

function FieldRow({ field }: { field: Field }) {
  return (
    <label
      className={`flex items-center border-b border-[#3a3a3a] bg-[#646464] ${
        field.child ? "pl-[21px]" : "pl-[13px]"
      } ${field.kind === "hierarchy" ? "text-[#e8c52f]" : ""}`}
    >
      <Disclosure open show={field.kind === "hierarchy"} />
      <span className="mr-1 ml-2 grid">
        <input
          type="checkbox"
          defaultChecked={field.checked}
          className="col-start-1 row-start-1 h-3 w-3 appearance-none border-2 border-[#cfcfcf] bg-white checked:border-[#ecce16] checked:bg-[#ecce16]"
        />
        {field.checked && (
          <Check className="pointer-events-none col-start-1 row-start-1 h-3 w-3 text-[#333]" strokeWidth={3} />
        )}
      </span>
      <KindIcon kind={field.kind} />
      <span className="ml-[5px] whitespace-nowrap">{field.name}</span>
    </label>
  );
}

function TableRow({ name, open, height }: { name: string; open?: boolean; height: string }) {
  return (
    <button className={`flex w-full shrink-0 items-center pl-1 ${height}`}>
      <Disclosure open={open} />
      <Icon box="0 0 12 10" className="ml-[9px] h-2.5 w-3">
        <path d="M0 0h12v10H0z" fill="#eee" />
        <path d="M0 3h12M0 6.500h12M4 3v7M8 3v7" stroke="#555" />
      </Icon>
      <span className={`ml-[11px] ${open ? "text-[#e8c52f]" : ""}`}>{name}</span>
    </button>
  );
}

function FieldsPane() {
  return (
    <aside className="flex w-[168px] shrink-0 flex-col border-l border-[#222] bg-[#444] text-[#f5f5f5]">
      <PaneHeader title="FIELDS" />
      <div className="shrink-0 border-b border-[#333] px-[3px] pt-1 pb-1">
        <SearchBox id="field-search" />
      </div>
      <div className="mt-2 flex min-h-0 grow overflow-hidden">
        <div className="-mt-[17px] flex min-w-0 grow flex-col pl-1">
          <TableRow name="Product" open height="h-7" />
          <div className="grid h-[228px] shrink-0 auto-rows-fr">
            {productFields.map((field, i) => (
              <FieldRow key={i} field={field} />
            ))}
          </div>
          <TableRow name="SalesFact" open height="h-7" />
          <div className="grid h-[186px] shrink-0 auto-rows-fr">
            {salesFields.map((field) => (
              <FieldRow key={field.name} field={field} />
            ))}
          </div>
          <TableRow name="Sentiment" height="h-[29px]" />
        </div>
        <div className="mt-[183px] w-1 shrink-0 rounded-t-sm bg-[#6f6f6f]" />
      </div>
    </aside>
  );
}

export default function App() {
  return (
    <div className="flex h-screen min-h-[600px] flex-col overflow-hidden border-b border-l border-black bg-[#333] font-['Open_Sans','Noto_Sans',sans-serif] text-[11px] text-[#333]">
      <TitleBar />
      <RibbonTabs />
      <Ribbon />
      <div className="flex min-h-0 grow">
        <ViewRail />
        <ReportArea />
        <VisualizationsPane />
        <FieldsPane />
      </div>
      <footer className="flex h-5 shrink-0 items-center justify-between bg-[#333] pr-[3px] pl-1 text-[10px] text-[#eee]">
        <span>PAGE 2 OF 2</span>
        <a href="#update">UPDATE AVAILABLE (CLICK TO DOWNLOAD)</a>
      </footer>
    </div>
  );
}
